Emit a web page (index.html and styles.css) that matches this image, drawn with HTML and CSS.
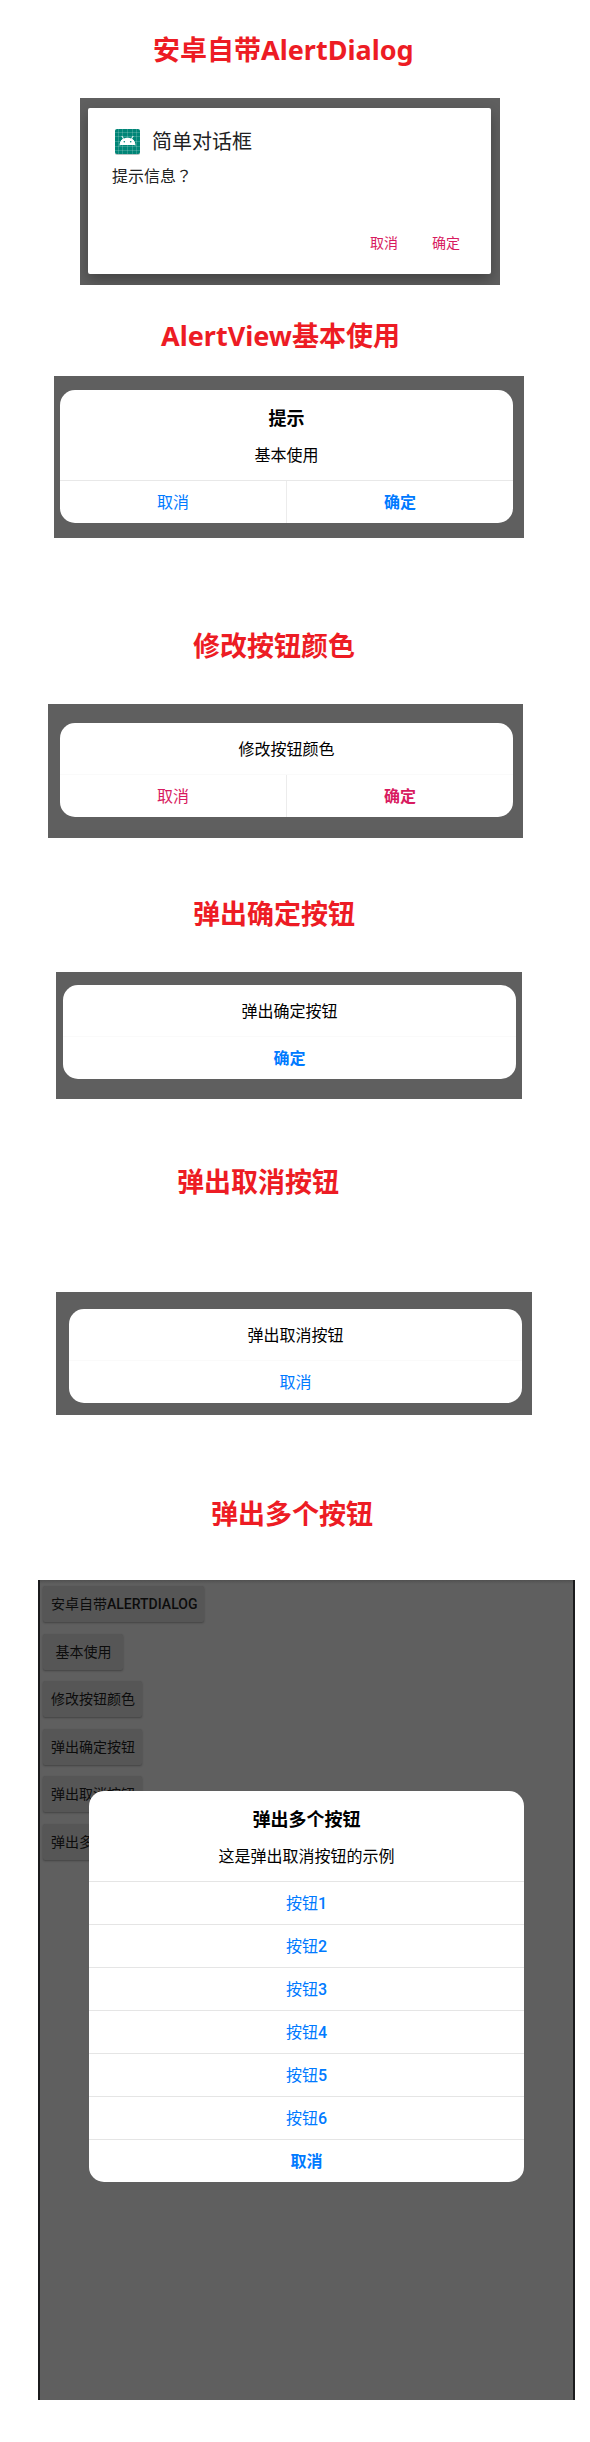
FILE: index.html
```html
<!DOCTYPE html>
<html lang="zh-CN">
<head>
<meta charset="utf-8">
<meta name="viewport" content="width=device-width, initial-scale=1">
<title>AlertView</title>
<link rel="stylesheet" href="styles.css">
</head>
<body>
<main class="page">
  <section class="demo demo-native">
    <h2 class="heading">安卓自带AlertDialog</h2>
    <div class="stage">
      <div class="native" role="dialog" aria-labelledby="native-title">
        <div class="native-head">
          <svg class="native-icon" viewBox="0 0 25 26" aria-hidden="true">
            <rect x="0" y="1" width="25" height="25" rx="2" fill="#b9c4c2"/>
            <rect x="0" y="0" width="25" height="25" rx="2" fill="#008577"/>
            <path d="M3.500 0v25M7.500 0v25M12.500 0v25M17.500 0v25M21.500 0v25M0 3.500h25M0 7.500h25M0 12.500h25M0 17.500h25M0 21.500h25" stroke="#fff" stroke-opacity=".22" stroke-width=".8" fill="none"/>
            <path d="M5 16c.2-3 1.500-5.100 3.500-6.500L7 7.300M20 16c-.2-3-1.500-5.100-3.500-6.500L18 7.300" stroke="#fff" stroke-width="1" fill="none" stroke-linecap="round"/>
            <path d="M5 16c.3-4.600 3.500-7.200 7.500-7.200S19.700 11.400 20 16z" fill="#fff"/>
            <circle cx="9.300" cy="12.800" r=".8" fill="#008577"/>
            <circle cx="15.700" cy="12.800" r=".8" fill="#008577"/>
          </svg>
          <h3 class="native-title" id="native-title">简单对话框</h3>
        </div>
        <p class="native-message">提示信息<span class="centered-mark" lang="zh-Hant">？</span></p>
        <div class="native-actions">
          <button type="button" class="native-button">取消</button>
          <button type="button" class="native-button">确定</button>
        </div>
      </div>
    </div>
  </section>

  <section class="demo demo-basic">
    <h2 class="heading">AlertView基本使用</h2>
    <div class="stage">
      <div class="alert" role="dialog">
        <div class="alert-body">
          <h3 class="alert-title">提示</h3>
          <p class="alert-message">基本使用</p>
        </div>
        <div class="alert-row">
          <button type="button" class="alert-button">取消</button>
          <button type="button" class="alert-button strong">确定</button>
        </div>
      </div>
    </div>
  </section>

  <section class="demo demo-color">
    <h2 class="heading">修改按钮颜色</h2>
    <div class="stage">
      <div class="alert compact" role="dialog">
        <div class="alert-body">
          <p class="alert-message">修改按钮颜色</p>
        </div>
        <div class="alert-row">
          <button type="button" class="alert-button accent">取消</button>
          <button type="button" class="alert-button accent strong">确定</button>
        </div>
      </div>
    </div>
  </section>

  <section class="demo demo-confirm">
    <h2 class="heading">弹出确定按钮</h2>
    <div class="stage">
      <div class="alert compact" role="dialog">
        <div class="alert-body">
          <p class="alert-message">弹出确定按钮</p>
        </div>
        <div class="alert-row">
          <button type="button" class="alert-button strong">确定</button>
        </div>
      </div>
    </div>
  </section>

  <section class="demo demo-cancel">
    <h2 class="heading">弹出取消按钮</h2>
    <div class="stage">
      <div class="alert compact" role="dialog">
        <div class="alert-body">
          <p class="alert-message">弹出取消按钮</p>
        </div>
        <div class="alert-row">
          <button type="button" class="alert-button">取消</button>
        </div>
      </div>
    </div>
  </section>

  <section class="demo demo-multi">
    <h2 class="heading">弹出多个按钮</h2>
    <div class="phone">
      <div class="launchers">
        <button type="button" class="launcher">安卓自带<span class="medium">ALERTDIALOG</span></button>
        <button type="button" class="launcher">基本使用</button>
        <button type="button" class="launcher">修改按钮颜色</button>
        <button type="button" class="launcher">弹出确定按钮</button>
        <button type="button" class="launcher">弹出取消按钮</button>
        <button type="button" class="launcher">弹出多个按钮</button>
      </div>
      <div class="alert overlay" role="dialog">
        <div class="alert-body">
          <h3 class="alert-title">弹出多个按钮</h3>
          <p class="alert-message">这是弹出取消按钮的示例</p>
        </div>
        <div class="alert-list">
          <button type="button" class="alert-button">按钮<span class="medium">1</span></button>
          <button type="button" class="alert-button">按钮<span class="medium">2</span></button>
          <button type="button" class="alert-button">按钮<span class="medium">3</span></button>
          <button type="button" class="alert-button">按钮<span class="medium">4</span></button>
          <button type="button" class="alert-button">按钮<span class="medium">5</span></button>
          <button type="button" class="alert-button">按钮<span class="medium">6</span></button>
          <button type="button" class="alert-button strong">取消</button>
        </div>
      </div>
    </div>
  </section>
</main>
</body>
</html>
```

FILE: styles.css
```css
* {
  box-sizing: border-box;
}

body {
  margin: 0;
  background: #fff;
  font-family: Roboto, "Noto Sans CJK SC", sans-serif;
  color: #000;
}

h2,
h3,
p {
  margin: 0;
}

button {
  margin: 0;
  padding: 0;
  border: 0;
  background: none;
  font-family: inherit;
  cursor: pointer;
}

.medium {
  font-weight: 500;
}

.page {
  padding: 32px 0 42px;
}

.demo {
  display: flex;
  flex-direction: column;
}

.heading {
  color: #ed1c24;
  font-family: "Noto Sans", "Noto Sans CJK SC", sans-serif;
  font-size: 27px;
  line-height: 36px;
  font-weight: 700;
  white-space: nowrap;
}

.stage {
  background: #5f5f5f;
  overflow: hidden;
}

/* Section placement */
.demo-native .heading { margin-left: 153px; }
.demo-native .stage { margin: 30px 90px 33px 80px; padding: 10px 9px 11px 8px; }

.demo-basic .heading { margin-left: 161px; }
.demo-basic .stage { margin: 22px 66px 90px 54px; padding: 14px 11px 15px 6px; }

.demo-color .heading { margin-left: 193px; }
.demo-color .stage { margin: 40px 67px 58px 48px; padding: 19px 10px 21px 12px; }

.demo-confirm .heading { margin-left: 193px; }
.demo-confirm .stage { margin: 40px 68px 65px 56px; padding: 13px 6px 20px 7px; }

.demo-cancel .heading { margin-left: 177px; }
.demo-cancel .stage { margin: 92px 58px 81px 56px; padding: 17px 10px 12px 13px; }

.demo-multi .heading { margin-left: 211px; }

/* Platform dialog */
.native {
  padding: 20px 14px 13px 24px;
  border-radius: 2px;
  background: #fff;
  box-shadow: 0 6px 14px rgba(0, 0, 0, 0.3);
}

.native-head {
  display: flex;
  align-items: center;
  gap: 12px;
  height: 28px;
  padding-left: 3px;
}

.native-icon {
  width: 25px;
  height: 26px;
}

.native-title {
  color: #212121;
  font-size: 20px;
  line-height: 28px;
  font-weight: 400;
}

.native-message {
  margin-top: 9px;
  color: #212121;
  font-size: 16px;
  line-height: 24px;
}

.centered-mark {
  font-family: "Noto Sans CJK TC", sans-serif;
  line-height: 16px;
}

.native-actions {
  display: flex;
  justify-content: flex-end;
  margin-top: 36px;
}

.native-button {
  height: 36px;
  width: 62px;
  color: #d81b60;
  font-size: 14px;
  line-height: 20px;
}

/* AlertView card */
.alert {
  border-radius: 15px;
  background: #fff;
  overflow: hidden;
  text-align: center;
}

.alert-body {
  display: grid;
  gap: 14px;
  padding: 17px 16px 12px;
}

.compact .alert-body {
  padding: 15px 16px 12px;
}

.alert-title {
  font-size: 18px;
  line-height: 23px;
  font-weight: 700;
}

.alert-message {
  font-size: 16px;
  line-height: 24px;
}

.alert-row {
  display: flex;
  border-top: 1px solid #e8e8e8;
}

.compact .alert-row {
  border-top-color: #fafafa;
}

.alert-row .alert-button {
  flex: 1;
  height: 42px;
}

.alert-row .alert-button + .alert-button {
  border-left: 1px solid #ececec;
}

.alert-button {
  padding-top: 1px;
  color: #007aff;
  font-size: 16px;
  line-height: 24px;
  font-weight: 400;
}

.alert-button.accent { color: #d81b60; }
.alert-button.strong { font-weight: 700; }

.alert-list {
  display: grid;
}

.alert-list .alert-button {
  height: 43px;
  border-top: 1px solid #e5e5e5;
}

/* Dimmed phone screen */
.phone {
  position: relative;
  min-height: 820px;
  margin: 48px 15px 0 38px;
  padding: 6px 3px;
  border: solid #1b1b1d;
  border-width: 0 2px;
  background: linear-gradient(#505050, #5f5f5f 4px);
}

.launchers {
  display: flex;
  flex-direction: column;
  align-items: flex-start;
  justify-content: space-between;
  height: 274px;
}

.launcher {
  min-width: 80px;
  height: 36px;
  padding: 0 7px 0 8px;
  border-radius: 2px;
  background: #565656;
  box-shadow: 0 1px 2px rgba(0, 0, 0, 0.3);
  color: #0c0c0c;
  font-size: 14px;
  line-height: 20px;
  font-weight: 400;
}

.overlay {
  position: absolute;
  top: 211px;
  left: 49px;
  right: 49px;
}
```
